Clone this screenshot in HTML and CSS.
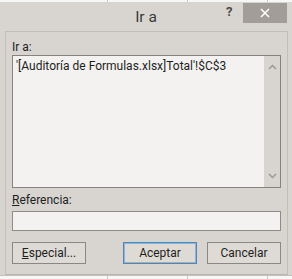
FILE: index.html
```html
<!DOCTYPE html>
<html>
	<head>
		<title>Ir a</title>
		<meta charset="utf-8"/>
		<link rel="stylesheet" href="styles.css">
	</head>
	<body>
		<div class="sheet top"></div>
		<div id="dialog">
			<div class="titlebar">
				<span class="title">Ir a</span>
				<span class="help">?</span>
				<span class="close">
					<svg width="10" height="10" viewBox="0 0 10 10"><path d="M1 1 L9 9 M9 1 L1 9" stroke="#fff" stroke-width="1.6"/></svg>
				</span>
			</div>
			<div class="panel">
				<div class="label">Ir a:</div>
				<div class="listbox">
					<div class="items">
						<div class="item">'[Auditoría de Formulas.xlsx]Total'!$C$3</div>
					</div>
					<div class="scrollbar">
						<svg width="9" height="6" viewBox="0 0 9 6"><path d="M1 5 L4.5 1.5 L8 5" fill="none" stroke="#9c9996" stroke-width="1.5"/></svg>
						<svg width="9" height="6" viewBox="0 0 9 6"><path d="M1 1 L4.5 4.5 L8 1" fill="none" stroke="#9c9996" stroke-width="1.5"/></svg>
					</div>
				</div>
				<div class="label ref"><u>R</u>eferencia:</div>
				<div class="input"></div>
				<div class="buttons">
					<button class="btn"><u>E</u>special...</button>
					<div class="right">
						<button class="btn default">Aceptar</button>
						<button class="btn">Cancelar</button>
					</div>
				</div>
			</div>
		</div>
		<div class="sheet bottom"></div>
	</body>
</html>
```

FILE: styles.css
```css
html { width:100%; height:100% }
body {
	margin:0px;
	background:#f7f7f5;
	font-family:Roboto, "Noto Sans", sans-serif;
	font-size:12px;
	color:#1e1e1e;
	width:292px;
	height:279px;
	overflow:hidden;
	display:flex;
	flex-direction:column;
}
.sheet {
	background:repeating-linear-gradient(90deg, transparent 0px, transparent 79px, #c9c9c7 79px, #c9c9c7 80px);
	background-position:28px 0;
	background-color:#f7f7f5;
}
.sheet.top { height:2px; }
.sheet.bottom { flex:1; border-top:1px solid #c4c1bd; }

#dialog {
	height:273px;
	background:#d8d5d1;
	display:flex;
	flex-direction:column;
}
.titlebar {
	height:29px;
	position:relative;
}
.title {
	position:absolute;
	left:0; right:0;
	top:6px;
	text-align:center;
	font-size:15.5px;
	color:#3a3a3a;
}
.help {
	position:absolute;
	left:226px;
	top:2px;
	font-size:13px;
	font-weight:bold;
	color:#4a4a4a;
}
.close {
	position:absolute;
	left:243px;
	top:1px;
	width:44px;
	height:20px;
	background:#a29d98;
	display:flex;
	justify-content:center;
	align-items:center;
}

.panel {
	flex:1;
	margin:0 4px 0 5px;
	border:1px solid #c2bfbb;
	border-bottom-color:#b8b5b1;
	padding:0 6px 0 6px;
	display:flex;
	flex-direction:column;
}
.label {
	margin-top:8px;
	height:15px;
	line-height:15px;
}
.listbox {
	height:131px;
	border:1px solid #858280;
	display:flex;
}
.items {
	flex:1;
	background:#f3f2f0;
	padding:2px 3px;
}
.item {
	line-height:16px;
	white-space:nowrap;
}
.scrollbar {
	width:16px;
	background:#d8d5d1;
	display:flex;
	flex-direction:column;
	justify-content:space-between;
	align-items:center;
	padding:8px 0 8px 0;
}
.label.ref {
	margin-top:5px;
}
.input {
	margin-top:3px;
	height:18px;
	border:1px solid #8e8b88;
	background:#f3f2f0;
}
.buttons {
	margin-top:11px;
	display:flex;
	justify-content:space-between;
}
.right {
	display:flex;
	gap:10px;
}
.btn {
	width:74px;
	height:22px;
	padding:0;
	border:1px solid #8a8784;
	background:#dedbd7;
	font-family:inherit;
	font-size:12px;
	color:#1e1e1e;
}
.btn.default {
	border-color:#4f86b5;
	box-shadow:inset 0 0 0 1px #8fb5d6;
}
```
